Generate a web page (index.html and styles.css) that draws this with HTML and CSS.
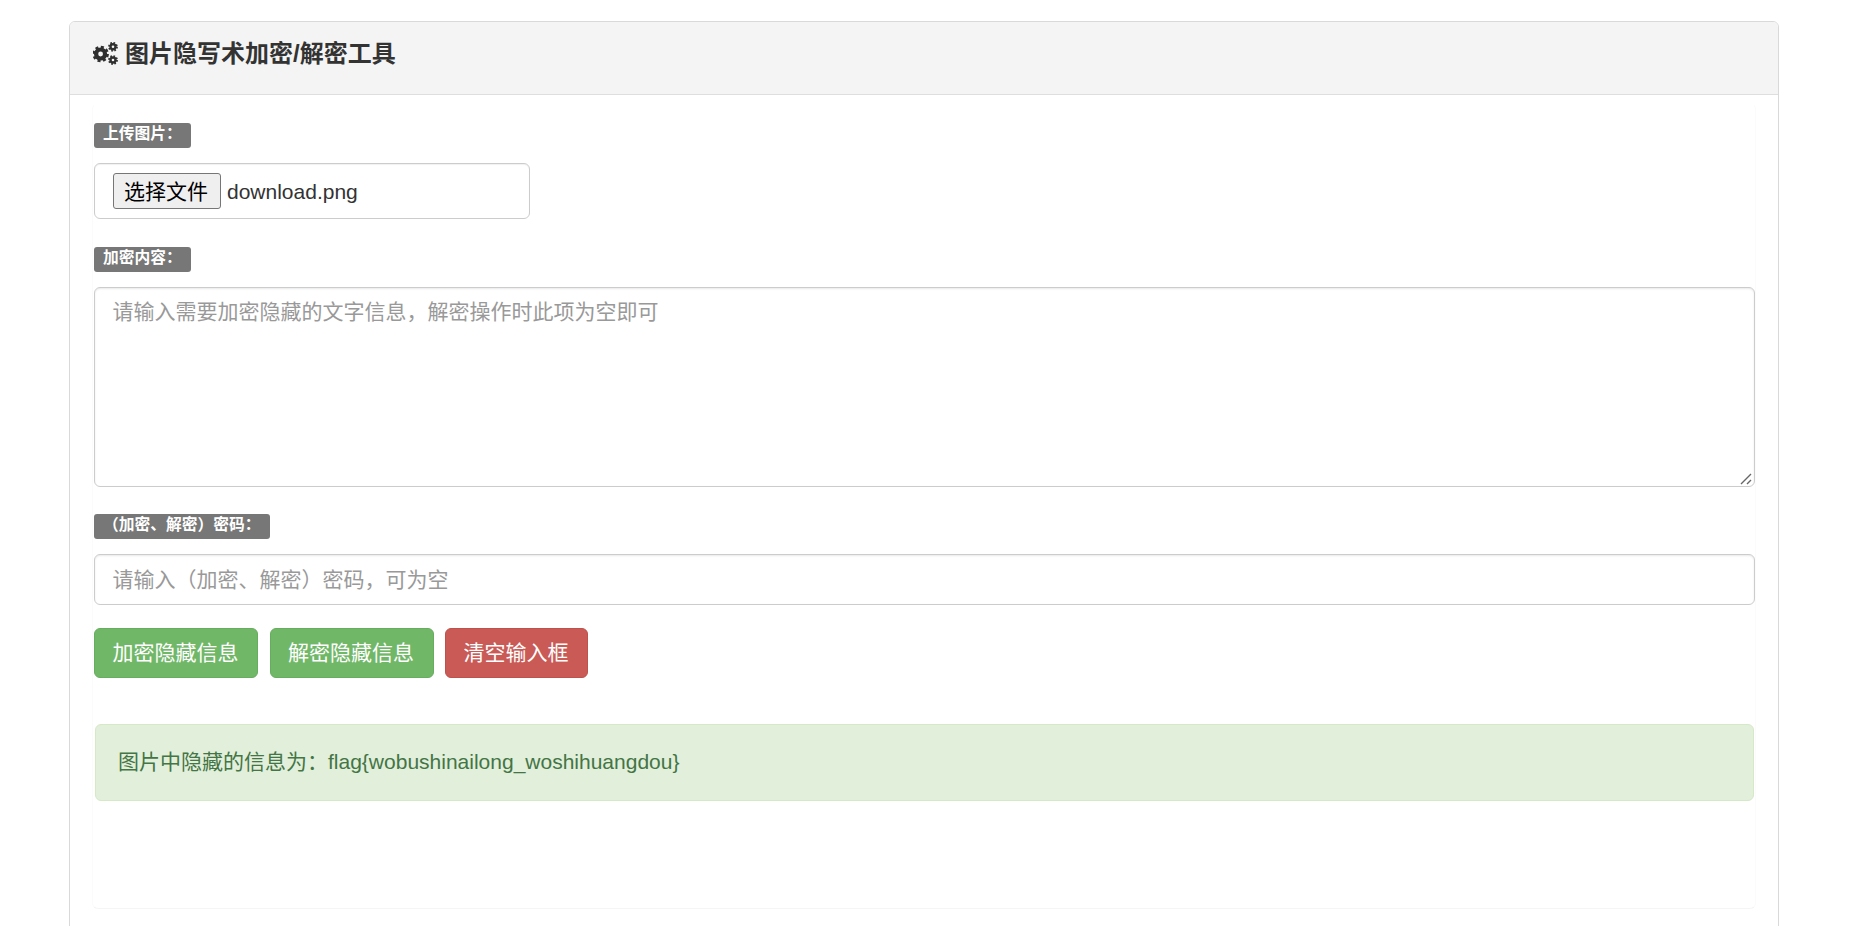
FILE: index.html
```html
<!DOCTYPE html>
<html lang="zh-CN">
<head>
<meta charset="utf-8">
<title>图片隐写术加密/解密工具</title>
<link rel="stylesheet" href="styles.css">
</head>
<body>
<main class="panel">
  <header class="panel-heading">
    <h3 class="panel-title">
      <svg class="cogs" viewBox="0 0 25 23" aria-hidden="true">
        <g fill="none" stroke="#2f2f2f">
          <circle cx="7.6" cy="12" r="4.5" stroke-width="4.2"/>
          <circle cx="7.6" cy="12" r="7" stroke-width="2.6" stroke-dasharray="3 2.5"/>
          <circle cx="20" cy="4.8" r="2.5" stroke-width="2.4"/>
          <circle cx="20" cy="4.8" r="4" stroke-width="1.8" stroke-dasharray="1.6 1.54"/>
          <circle cx="20" cy="18" r="2.5" stroke-width="2.4"/>
          <circle cx="20" cy="18" r="4" stroke-width="1.8" stroke-dasharray="1.6 1.54"/>
        </g>
      </svg>
      <span>图片隐写术加密/解密工具</span>
    </h3>
  </header>
  <div class="panel-body">
    <form class="inner">
      <div class="group group-file">
        <label class="label">上传图片：</label>
        <div class="file-box">
          <button type="button" class="file-btn">选择文件</button>
          <span class="file-name">download.png</span>
        </div>
      </div>
      <div class="group group-text">
        <label class="label">加密内容：</label>
        <div class="area-wrap">
          <textarea class="control area" placeholder="请输入需要加密隐藏的文字信息，解密操作时此项为空即可"></textarea>
          <svg class="grip" viewBox="0 0 12 12" aria-hidden="true">
            <path d="M1 11 11 1M7 11 11 7" fill="none" stroke="#666" stroke-width="1.4"/>
          </svg>
        </div>
      </div>
      <div class="group group-pass">
        <label class="label">（加密、解密）密码：</label>
        <input class="control line" type="text" placeholder="请输入（加密、解密）密码，可为空">
      </div>
      <div class="actions">
        <button type="button" class="btn btn-green">加密隐藏信息</button>
        <button type="button" class="btn btn-green">解密隐藏信息</button>
        <button type="button" class="btn btn-red">清空输入框</button>
      </div>
      <div class="alert">图片中隐藏的信息为：flag{wobushinailong_woshihuangdou}</div>
    </form>
  </div>
</main>
</body>
</html>
```
FILE: styles.css
```css
* { box-sizing: border-box; }
html, body { margin: 0; padding: 0; height: 926px; overflow: hidden; background: #fff; }
body {
  font-family: "Liberation Sans", "Noto Sans CJK SC", sans-serif;
  font-size: 21px;
  line-height: 30px;
  color: #333;
  padding: 21px 0 0 69px;
}
.panel {
  width: 1710px;
  border: 1px solid #d9d9d9;
  border-radius: 6px;
  background: #fff;
}
.panel-heading {
  height: 73px;
  padding: 0 23px 9px;
  display: flex;
  align-items: center;
  background: #f4f4f4;
  border-bottom: 1px solid #dedede;
  border-radius: 5px 5px 0 0;
}
.panel-title {
  margin: 0;
  display: flex;
  align-items: center;
  gap: 7px;
  font-size: 24px;
  line-height: 30px;
  font-weight: 700;
  color: #333;
}
.cogs { width: 25px; height: 23px; flex: none; }
.panel-body { padding: 8px 22px 60px; }
.inner {
  border: 1px solid #fbfbfb;
  border-top-color: transparent;
  border-bottom-color: #f5f5f5;
  border-radius: 6px;
  padding: 19px 0 107px 1px;
}
.group { display: flex; flex-direction: column; align-items: flex-start; gap: 15px; margin-bottom: 28px; }
.group-text { margin-bottom: 27px; }
.group-pass { margin-bottom: 23px; }
.label {
  display: block;
  height: 25px;
  padding: 0 9px;
  border-radius: 3px;
  background: #777;
  color: #fff;
  font-size: 15.75px;
  line-height: 22px;
  font-weight: 700;
  white-space: nowrap;
}
.file-box {
  width: 436px;
  height: 56px;
  padding: 2px 18px 0;
  display: flex;
  align-items: center;
  gap: 6px;
  border: 1px solid #ccc;
  border-radius: 6px;
  box-shadow: inset 0 1px 1px rgba(0,0,0,.06);
}
.file-btn {
  width: 108px;
  height: 36px;
  padding: 2px 2px 0 0;
  margin-top: -2px;
  background: #efefef;
  border: 1px solid #767676;
  border-radius: 3px;
  color: #000;
  font: inherit;
}
.file-name { color: #333; }
.control {
  display: block;
  width: 100%;
  border: 1px solid #ccc;
  border-radius: 6px;
  padding: 0 17.5px;
  font: inherit;
  color: #555;
  background: #fff;
  box-shadow: inset 0 1px 2px rgba(0,0,0,.09);
  outline: none;
}
.control::placeholder { color: #999; opacity: 1; }
.area-wrap { position: relative; width: 100%; }
.area { height: 200px; padding-top: 9px; padding-bottom: 9px; resize: none; }
.grip { position: absolute; right: 3px; bottom: 2px; width: 12px; height: 12px; }
.line { height: 51px; }
.actions { display: flex; gap: 11.5px; margin-bottom: 46px; }
.btn {
  height: 50px;
  padding: 0 18.5px 0 17.5px;
  border: 1px solid;
  border-radius: 6px;
  font: inherit;
  color: #fff;
}
.btn-green { background: #71b768; border-color: #66ad5e; }
.btn-red { background: #c95a55; border-color: #c0504b; }
.alert {
  margin: 0 1px;
  height: 77px;
  padding: 0 22px 2px;
  display: flex;
  align-items: center;
  background: #e2efdb;
  border: 1px solid #d6e9c6;
  border-radius: 6px;
  color: #437545;
}
```
